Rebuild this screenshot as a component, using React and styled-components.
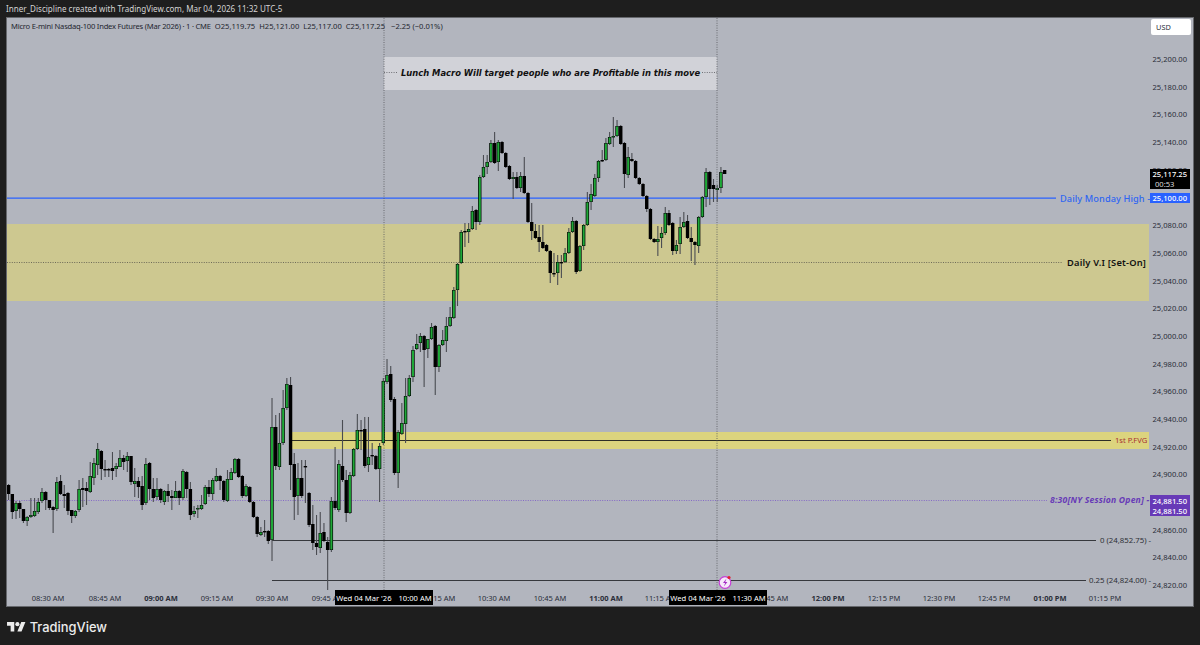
import React from "react";
import styled, { createGlobalStyle } from "styled-components";

const Global = createGlobalStyle`
  html, body { margin: 0; padding: 0; background: #1e1e1e; }
  body { width: 1200px; height: 645px; overflow: hidden; font-family: "Noto Sans", "Liberation Sans", sans-serif; }
`;

const OX = 7, OY = 18;

const Page = styled.div`
  width: 1200px; height: 645px; display: flex; flex-direction: column; background: #1e1e1e;
`;
const Header = styled.div`
  height: 17px; padding-left: 6px; display: flex; align-items: center;
  color: #d4d4d4; font-size: 8.05px; white-space: nowrap;
`;
const Panel = styled.div`
  margin: 0 6px; height: 590px; box-sizing: border-box; display: flex;
  border: 1px solid #66686d; background: #b2b5be; position: relative; overflow: hidden;
`;
const PlotColumn = styled.div`
  width: 1143px; display: flex; flex-direction: column; position: relative;
`;
const Plot = styled.div`
  height: 572px; position: relative;
`;
const ChartSvg = styled.svg`
  display: block; width: 1143px; height: 572px;
`;
const TimeAxis = styled.div`
  height: 16px; position: relative; font-size: 7.5px;
`;
const TimeLabel = styled.span`
  position: absolute; top: 3px; left: ${p => p.$x - OX}px; transform: translateX(-50%);
  white-space: nowrap; font-weight: ${p => (p.$bold ? 700 : 400)}; color: #2a2e39;
`;
const TimeTip = styled.div`
  position: absolute; top: 0; left: ${p => p.$x - OX}px; width: ${p => p.$w}px; height: 15px;
  background: #000; color: #fff; font-size: 7.6px; box-sizing: border-box;
  display: flex; align-items: center; justify-content: center; gap: 7px; white-space: nowrap;
`;
const PriceAxis = styled.div`
  flex: 1; position: relative; font-size: 7.6px; color: #2a2e39;
`;
const PriceLabel = styled.span`
  position: absolute; right: 6px; top: ${p => p.$y - OY - 6}px; line-height: 12px; white-space: nowrap;
`;
const UsdBox = styled.div`
  position: absolute; left: 1px; top: 1px; width: 40px; height: 16px; background: #fff;
  border-radius: 2px; box-sizing: border-box; padding-left: 5px; display: flex; align-items: center;
  color: #2a2e39; font-size: 7.4px;
`;
const PriceTag = styled.div`
  position: absolute; left: 0; width: 40px; top: ${p => p.$y - OY}px; height: ${p => p.$h}px;
  background: ${p => p.$bg}; color: #fff; box-sizing: border-box; padding-right: 3px;
  display: flex; flex-direction: column; justify-content: center; align-items: flex-end;
  line-height: 10px; font-weight: 500;
`;
const TagSub = styled.span`
  align-self: flex-start; padding-left: 5px; color: #d8d8d8; font-weight: 400;
`;
const Legend = styled.div`
  position: absolute; left: 4px; top: 3px; color: #23262f; font-size: 7.6px; white-space: nowrap;
  display: flex; gap: 4px;
`;
const LegendTitle = styled.span`
  letter-spacing: -0.22px;
`;
const LegendChange = styled.span`
  margin-left: 2px;
`;
const ChartText = styled.span`
  position: absolute; left: ${p => p.$x - OX}px; top: ${p => p.$y - OY}px; transform: translateY(-50%);
  white-space: nowrap; color: ${p => p.$color}; font-size: ${p => p.$size}px;
  font-weight: ${p => p.$weight || 400}; font-style: ${p => (p.$italic ? "italic" : "normal")};
  letter-spacing: ${p => p.$ls || 0}px;
  font-family: ${p => (p.$dv ? '"DejaVu Sans", sans-serif' : "inherit")};
`;
const Footer = styled.div`
  flex: 1; display: flex; align-items: center; gap: 4px; padding: 3px 0 0 7px;
`;
const Wordmark = styled.span`
  color: #ececec; font-family: Inter, sans-serif; font-weight: 500; font-size: 12.9px;
`;

/* [bodyTop, bodyBottom, wickTop, wickBottom, green] in page pixels; one candle per minute from 08:19 */
const C = [
[485,494,484,500,0],[494,512,494,519,0],[503,511,501,519,1],[503,509,501,518,0],[509,521,509,523,0],
[517,521,516,526,1],[515,517,498,518,1],[511,516,498,517,1],[502,512,498,514,1],[492,501,488,503,1],
[492,500,491,510,0],[500,508,500,510,0],[507,510,506,533,0],[482,509,477,511,1],[481,494,475,495,0],
[494,496,485,508,0],[493,511,492,515,0],[510,516,510,523,0],[511,516,510,518,1],[489,510,480,512,1],
[488,490,478,507,0],[488,491,482,505,0],[476,492,462,493,1],[463,478,458,485,1],[449,465,443,475,1],
[451,469,450,480,0],[469,470,460,477,0],[469,470,468,477,0],[468,471,452,480,0],[466,469,463,477,1],
[458,467,450,467,1],[458,462,455,470,0],[456,461,452,472,1],[456,482,456,485,0],[481,484,468,497,1],
[481,487,477,498,0],[486,505,476,510,0],[464,503,458,505,1],[463,489,462,500,0],[489,498,478,502,0],
[489,497,478,500,1],[489,500,488,503,0],[491,502,490,505,1],[491,496,484,502,0],[496,498,490,510,0],
[491,498,481,498,1],[491,498,490,505,0],[471,498,469,500,1],[472,489,471,498,0],[489,515,482,520,0],
[511,514,506,517,1],[508,509,505,518,1],[505,509,495,510,1],[487,504,485,505,1],[487,494,480,497,0],
[480,494,478,500,1],[476,481,468,482,1],[476,481,475,490,0],[481,500,480,502,0],[479,501,470,502,1],
[472,480,468,480,1],[459,473,458,474,1],[459,477,458,478,0],[476,496,475,498,0],[486,496,484,497,1],
[487,502,486,503,0],[502,517,501,518,0],[517,534,516,537,0],[532,535,527,536,1],[531,532,520,537,0],
[531,541,530,544,0],[427,540,398,561,1],[427,466,415,470,0],[443,467,413,470,1],[408,443,390,445,1],
[384,408,378,410,1],[385,465,377,490,0],[464,497,453,520,0],[478,496,463,515,1],[478,496,460,498,0],
[466,467,460,503,0],[493,525,492,527,0],[524,543,505,550,0],[543,547,515,555,0],[533,548,512,553,1],
[532,541,523,542,0],[542,550,537,590,0],[501,550,497,552,1],[501,508,447,510,0],[464,510,460,512,1],
[466,480,420,482,0],[480,513,470,522,0],[475,513,472,514,1],[449,476,448,477,1],[430,449,414,450,1],
[430,431,420,450,0],[429,466,417,468,0],[457,465,417,472,1],[455,456,443,465,0],[456,469,455,470,0],
[446,469,443,502,1],[381,443,378,445,1],[375,382,359,384,1],[374,400,366,402,0],[399,473,397,475,0],
[432,473,430,488,1],[423,434,403,435,1],[396,424,378,443,1],[378,396,375,397,1],[350,377,346,382,1],
[344,349,334,350,1],[336,343,333,352,1],[336,350,335,387,0],[339,349,339,358,1],[327,339,323,340,1],
[326,367,325,395,0],[345,367,344,372,1],[340,345,330,346,1],[326,341,317,352,1],[317,326,307,327,1],
[290,318,287,319,1],[264,290,263,306,1],[232,263,230,264,1],[231,232,223,247,0],[229,232,223,243,1],
[211,229,206,230,1],[210,222,209,230,0],[177,222,175,225,1],[167,177,155,178,1],[162,167,155,174,1],
[143,162,140,163,1],[143,163,132,164,0],[142,162,140,171,1],[142,153,141,154,0],[153,167,152,168,0],
[166,179,165,180,0],[177,179,172,199,1],[177,188,172,189,0],[176,188,172,192,1],[176,193,157,194,0],
[193,222,192,223,0],[222,231,203,240,0],[231,238,224,239,0],[237,242,225,252,0],[242,248,225,249,0],
[245,251,244,252,0],[251,273,250,283,0],[273,274,253,277,0],[262,273,255,285,1],[262,263,255,278,0],
[253,262,248,263,1],[232,253,228,254,1],[221,232,217,233,1],[221,272,220,274,0],[246,271,245,272,1],
[225,246,224,250,1],[202,225,192,226,1],[194,202,184,210,1],[178,196,174,197,1],[161,178,160,182,1],
[160,161,150,162,0],[143,160,138,161,1],[137,144,132,145,1],[136,137,117,147,1],[126,136,120,137,1],
[126,144,125,145,0],[143,174,142,188,0],[157,175,147,178,1],[159,161,153,162,0],[161,178,160,179,0],
[178,184,177,185,0],[184,196,183,197,0],[196,209,195,212,0],[209,239,208,240,0],[239,242,238,243,0],
[239,242,226,256,1],[233,238,227,248,1],[213,233,207,235,1],[213,225,210,226,0],[223,251,222,255,0],
[245,251,240,254,1],[227,244,217,254,1],[222,227,212,228,1],[221,238,215,239,0],[238,242,227,261,0],
[242,245,241,265,0],[217,246,216,253,1],[197,217,196,218,1],[172,197,168,207,1],[172,189,171,205,0],
[185,189,179,202,0],[188,190,185,202,1],[172,188,167,193,1],[170,174,170,174,0],
];

const xOf = i => 8.6 + 3.71 * i;

const Candle = ({ i, d }) => {
  const [t, b, wt, wb, g] = d;
  const x = xOf(i);
  const h = Math.max(b - t, 1.4);
  return (
    <g>
      <line x1={x} x2={x} y1={wt} y2={wb} stroke="#4a4c52" strokeWidth="1.1" />
      <rect x={x - 1.7} y={t} width="3.4" height={h} fill="#000" />
      {g ? <rect x={x - 1} y={t + 0.5} width="2" height={Math.max(h - 1, 0.6)} fill="#1fa838" /> : null}
    </g>
  );
};

const PRICES = ["25,200.00","25,180.00","25,160.00","25,140.00","25,120.00","25,080.00","25,060.00","25,040.00","25,020.00","25,000.00","24,980.00","24,960.00","24,940.00","24,920.00","24,900.00","24,860.00","24,840.00","24,820.00"];
const priceY = s => 59 + (25200 - Number(s.replace(",", ""))) * 1.3845;

const TIMES = [
  ["08:30 AM",48],["08:45 AM",105],["09:00 AM",161,1],["09:15 AM",217],["09:30 AM",272],["09:45 AM",328],
  ["10:15 AM",439],["10:30 AM",494],["10:45 AM",550],["11:00 AM",606,1],["11:15 AM",661],["11:45 AM",772],
  ["12:00 PM",828,1],["12:15 PM",884],["12:30 PM",939],["12:45 PM",994],["01:00 PM",1050,1],["01:15 PM",1105],
];

const Logo = () => (
  <svg width="18.7" height="14.5" viewBox="0 0 36 28" fill="#ececec">
    <path d="M14 22H7V11H0V4h14v18zM28 22h-8l7.5-18h8L28 22z" />
    <circle cx="20" cy="8" r="4" />
  </svg>
);

export default function App() {
  return (
    <Page>
      <Global />
      <Header>Inner_Discipline created with TradingView.com, Mar 04, 2026 11:32 UTC-5</Header>
      <Panel>
        <PlotColumn>
          <Plot>
            <ChartSvg viewBox={`${OX} ${OY} 1143 572`}>
              <rect x="7" y="224" width="1142" height="77" fill="#cdc890" />
              <rect x="290" y="432" width="859" height="17" fill="#dcd47e" />
              <rect x="384" y="57" width="333" height="33" fill="#d1d2d8" />
              <line x1="384" x2="398" y1="72.5" y2="72.5" stroke="#55575c" strokeWidth="0.8" strokeDasharray="1 1.4" />
              <line x1="702" x2="717" y1="72.5" y2="72.5" stroke="#55575c" strokeWidth="0.8" strokeDasharray="1 1.4" />
              <line x1="7" x2="1062" y1="262.5" y2="262.5" stroke="#55534a" strokeWidth="0.8" strokeDasharray="1 1.4" />
              <line x1="7" x2="1047" y1="500.5" y2="500.5" stroke="#7a55c8" strokeWidth="0.8" strokeDasharray="1 1.4" />
              <line x1="7" x2="1056" y1="198.2" y2="198.2" stroke="#2962ff" strokeWidth="1.3" />
              <line x1="290" x2="1111" y1="440.5" y2="440.5" stroke="#2e2e26" strokeWidth="1" />
              <line x1="272" x2="1096" y1="540.5" y2="540.5" stroke="#36383d" strokeWidth="1" />
              <line x1="272" x2="1086" y1="580.5" y2="580.5" stroke="#36383d" strokeWidth="1" />
              {C.map((d, i) => <Candle key={i} i={i} d={d} />)}
              <line x1="384" x2="384" y1="18" y2="590" stroke="#55575c" strokeWidth="0.8" strokeDasharray="1 1.4" />
              <line x1="717" x2="717" y1="18" y2="590" stroke="#55575c" strokeWidth="0.8" strokeDasharray="1 1.4" />
              <circle cx="725" cy="582.5" r="5.8" fill="#f6e8fa" stroke="#c63fd8" strokeWidth="1.2" />
              <path d="M726.5 578.5 L723 583 H725.2 L723.8 586.5 L727.4 582 H725.2 Z" fill="#a32cc4" />
              <circle cx="729" cy="577.5" r="1.6" fill="#e5202e" />
            </ChartSvg>
            <Legend>
              <LegendTitle>Micro E-mini Nasdaq-100 Index Futures (Mar 2026) · 1 · CME</LegendTitle>
              <span>O25,119.75</span><span>H25,121.00</span><span>L25,117.00</span><span>C25,117.25</span><LegendChange>−2.25 (−0.01%)</LegendChange>
            </Legend>
            <ChartText $x={401} $y={73} $color="#111" $size={8.4} $weight={700} $italic $dv>Lunch Macro Will target people who are Profitable in this move</ChartText>
            <ChartText $x={1060} $y={198} $color="#2f66f2" $size={9.2} $weight={500} $ls={0.1}>Daily Monday High -</ChartText>
            <ChartText $x={1067} $y={262} $color="#111" $size={9.3} $weight={600} $ls={0.2}>Daily V.I [Set-On]</ChartText>
            <ChartText $x={1115} $y={440} $color="#a83232" $size={7.6}>1st P.FVG</ChartText>
            <ChartText $x={1050} $y={499.5} $color="#673ab7" $size={8.6} $weight={700} $italic $ls={0.2}>8:30[NY Session Open] -</ChartText>
            <ChartText $x={1100} $y={540} $color="#2e3036" $size={7.8}>0 (24,852.75) -</ChartText>
            <ChartText $x={1089} $y={580} $color="#2e3036" $size={7.8}>0.25 (24,824.00) -</ChartText>
          </Plot>
          <TimeAxis>
            {TIMES.map(([t, x, b]) => <TimeLabel key={t} $x={x} $bold={b}>{t}</TimeLabel>)}
            <TimeTip $x={335} $w={98}><span>Wed 04 Mar '26</span><span>10:00 AM</span></TimeTip>
            <TimeTip $x={669} $w={98}><span>Wed 04 Mar '26</span><span>11:30 AM</span></TimeTip>
          </TimeAxis>
        </PlotColumn>
        <PriceAxis>
          <UsdBox>USD</UsdBox>
          {PRICES.map(p => <PriceLabel key={p} $y={priceY(p)}>{p}</PriceLabel>)}
          <PriceTag $y={169} $h={20} $bg="#000">25,117.25<TagSub>00:53</TagSub></PriceTag>
          <PriceTag $y={193} $h={10} $bg="#2962ff">25,100.00</PriceTag>
          <PriceTag $y={495} $h={21} $bg="#673ab7">24,881.50<span>24,881.50</span></PriceTag>
        </PriceAxis>
      </Panel>
      <Footer><Logo /><Wordmark>TradingView</Wordmark></Footer>
    </Page>
  );
}
